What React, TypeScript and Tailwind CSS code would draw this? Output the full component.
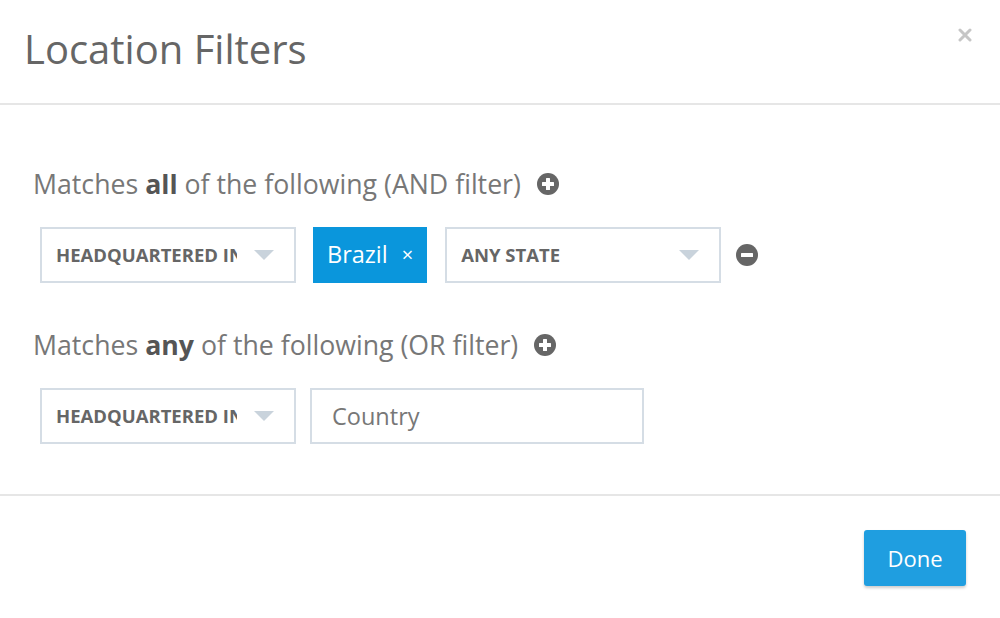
import { useState } from 'react';

function Caret() {
  return (
    <svg width="20" height="10" viewBox="0 0 20 10" className="shrink-0">
      <path d="M0 0 L20 0 L10 10 Z" fill="#c9d3dc" />
    </svg>
  );
}

function CircleIcon({ kind }: { kind: 'plus' | 'minus' }) {
  return (
    <svg width="22" height="22" viewBox="0 0 22 22" className="shrink-0">
      <circle cx="11" cy="11" r="11" fill="#666666" />
      <rect x="5" y="9" width="12" height="4" rx="0.5" fill="#fff" />
      {kind === 'plus' && <rect x="9" y="5" width="4" height="12" rx="0.5" fill="#fff" />}
    </svg>
  );
}

function Select({ label, width }: { label: string; width: string }) {
  return (
    <div className={`flex h-[56px] items-center border-2 border-[#d5dde5] bg-white pl-[14px] pr-[20px] ${width}`}>
      <span className="mr-[17px] flex-1 overflow-hidden whitespace-nowrap text-[18.5px] font-bold uppercase text-[#666]">
        {label}
      </span>
      <Caret />
    </div>
  );
}

function Label({ word, rest }: { word: string; rest: string }) {
  return (
    <div className="flex items-center gap-[16px] text-[26.7px] leading-[32px] text-[#777]">
      <span>
        Matches <b className="font-bold text-[#555]">{word}</b> {rest}
      </span>
      <CircleIcon kind="plus" />
    </div>
  );
}

export default function App() {
  const [country, setCountry] = useState('');
  return (
    <div className="relative h-[618px] w-[1000px] bg-white" style={{ fontFamily: '"Open Sans", sans-serif' }}>
      <header className="flex h-[105px] items-center border-b-2 border-[#e6e6e6] px-[24px] pb-[6px]">
        <h1 className="text-[40px] font-normal text-[#666]">Location Filters</h1>
      </header>
      <button className="absolute right-[28px] top-[28px]">
        <svg width="14" height="14" viewBox="0 0 14 14">
          <path d="M2 2 L12 12 M12 2 L2 12" stroke="#c6c6c6" strokeWidth="3" strokeLinecap="round" />
        </svg>
      </button>

      <div className="px-[33px] pb-[50px] pt-[63px]">
        <Label word="all" rest="of the following (AND filter)" />
        <div className="mt-[27px] flex items-center gap-[17px] pl-[7px]">
          <Select label="Headquartered in" width="w-[256px]" />
          <div className="flex h-[56px] items-center gap-[14px] bg-[#0a96dc] pl-[14px] pr-[14px] text-[23.5px] text-white">
            <span>Brazil</span>
            <span className="text-[20px]">×</span>
          </div>
          <div className="ml-[1px]">
            <Select label="Any state" width="w-[276px]" />
          </div>
          <div className="-ml-[2px]">
            <CircleIcon kind="minus" />
          </div>
        </div>

        <div className="mt-[46px]">
          <Label word="any" rest="of the following (OR filter)" />
        </div>
        <div className="mt-[27px] flex items-center gap-[14px] pl-[7px]">
          <Select label="Headquartered in" width="w-[256px]" />
          <input
            value={country}
            onChange={(e) => setCountry(e.target.value)}
            placeholder="Country"
            className="h-[56px] w-[334px] border-2 border-[#d5dde5] px-[20px] text-[23.5px] text-[#777] placeholder:text-[#777] outline-none"
          />
        </div>
      </div>

      <footer className="flex justify-end border-t-2 border-[#e6e6e6] pr-[34px] pt-[34px]">
        <button className="h-[56px] w-[102px] rounded-[3px] bg-[#1f9ee0] text-[22px] text-white shadow-[0_2px_3px_rgba(0,0,0,0.2)]">
          Done
        </button>
      </footer>
    </div>
  );
}
